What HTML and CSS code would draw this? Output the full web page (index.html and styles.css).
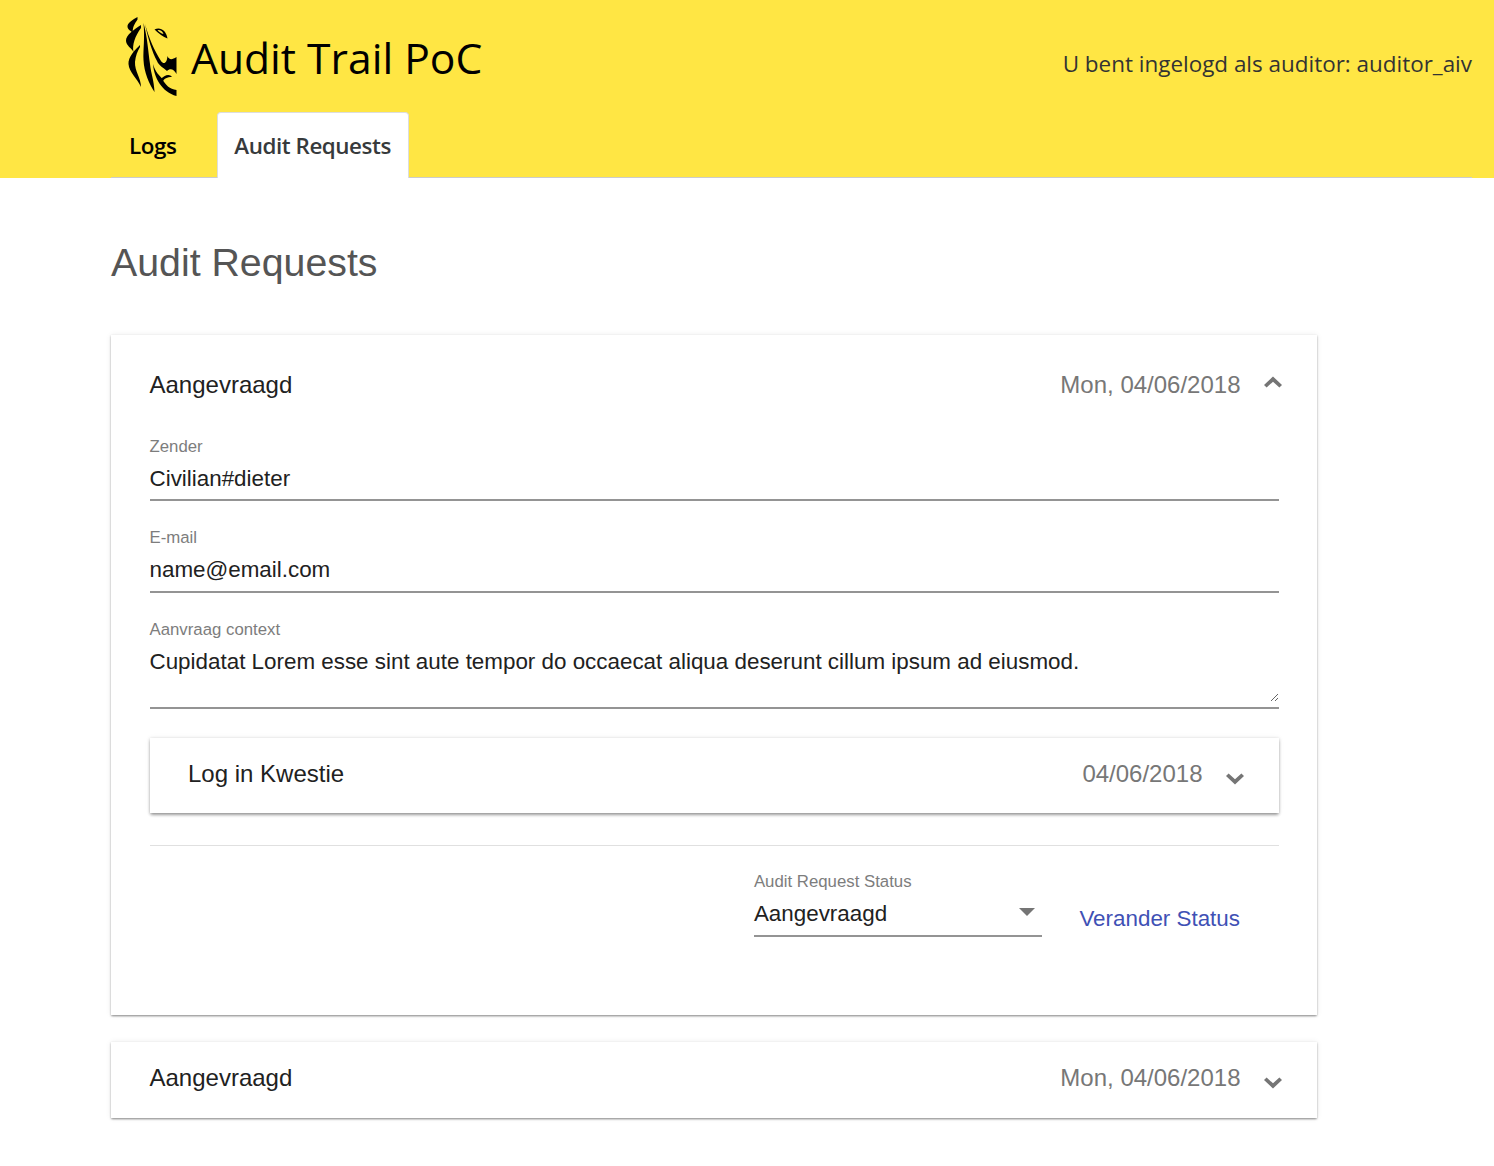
FILE: index.html
```html
<!DOCTYPE html>
<html lang="en">
<head>
    <meta charset="UTF-8">
    <meta name="viewport" content="width=device-width, initial-scale=1.0">
    <title>Audit Trail PoC</title>
    <link rel="stylesheet" href="styles.css">
</head>
<body>
    <header class="site-header">
        <div class="header-top">
            <div class="brand">
                <svg class="logo" viewBox="125 16 52 80" width="52" height="80" aria-hidden="true">
                    <path d="M137.500 17C133 19.500 127 23 127.500 27C128 30 131.500 31 133 33C132 28 134.500 24 137.500 19.500Z"/>
                    <path d="M141 25C135 29 125.500 35 126 41C126.500 46 131.500 48 133.500 52C132 45 135 36 141 28Z"/>
                    <path d="M140 45C135 50 128 57 128.500 64C129 72 137 78 141 87C141 78 134.500 71 135 62C135.500 56 137.500 51 140 47Z"/>
                    <path d="M143.500 23C145 38 143 50 143.500 60C144 72 149 84 154.500 92C154 80 151 74 150 64C148 50 147.500 38 143.500 23Z"/>
                    <path d="M145 24C149 38 154 50 161 61C164 65 167 63 167.500 56C169 60 172 60 176.500 57L176.500 74C174 69 170 68 167 71C163 67 159 66 157 61C152 52 148 38 145 24Z"/>
                    <path d="M153 64C154 78 162 92 176.500 96L176.500 90C170 89 165 85 162.500 79C160 76 155 72 153 64Z"/>
                    <path d="M160 80C165 74 170 74 172 77C167 77 164 79 163 81Z"/>
                    <path d="M154.500 29.500C160 26.500 166 30 167.500 38.500C163 36.500 159 34 154.500 29.500Z"/>
                    <path class="logo-eye" d="M157.500 30C160 29.500 162.500 31 163.500 34C161 33.500 159 32 157.500 30Z"/>
                </svg>
                <h1 class="site-title">Audit Trail PoC</h1>
            </div>
            <p class="user-info">U bent ingelogd als auditor: auditor_aiv</p>
        </div>
        <nav class="tabs">
            <a class="tab" href="#">Logs</a>
            <a class="tab tab-active" href="#">Audit Requests</a>
        </nav>
    </header>

    <main class="content">
        <h2 class="page-title">Audit Requests</h2>

        <section class="panel panel-open">
            <div class="panel-head">
                <span class="panel-title">Aangevraagd</span>
                <span class="panel-date">Mon, 04/06/2018</span>
                <svg class="chevron" viewBox="0 0 18 11" width="18" height="12" aria-hidden="true"><path d="M9 0 18 8.400 15.400 11 9 5.200 2.600 11 0 8.400Z"/></svg>
            </div>

            <div class="field">
                <label class="field-label">Zender</label>
                <div class="field-value">Civilian#dieter</div>
            </div>
            <div class="field">
                <label class="field-label">E-mail</label>
                <div class="field-value">name@email.com</div>
            </div>
            <div class="field">
                <label class="field-label" for="context">Aanvraag context</label>
                <div class="field-area-wrap">
                    <textarea class="field-area" id="context" rows="2">Cupidatat Lorem esse sint aute tempor do occaecat aliqua deserunt cillum ipsum ad eiusmod.</textarea>
                </div>
            </div>

            <div class="panel panel-nested">
                <div class="panel-head">
                    <span class="panel-title">Log in Kwestie</span>
                    <span class="panel-date">04/06/2018</span>
                    <svg class="chevron chevron-down" viewBox="0 0 18 11" width="18" height="12" aria-hidden="true"><path d="M9 11 18 2.600 15.400 0 9 5.800 2.600 0 0 2.600Z"/></svg>
                </div>
            </div>

            <div class="panel-actions">
                <div class="field field-select">
                    <label class="field-label">Audit Request Status</label>
                    <div class="field-value">Aangevraagd<span class="select-arrow"></span></div>
                </div>
                <a class="action-link" href="#">Verander Status</a>
            </div>
        </section>

        <section class="panel">
            <div class="panel-head">
                <span class="panel-title">Aangevraagd</span>
                <span class="panel-date">Mon, 04/06/2018</span>
                <svg class="chevron chevron-down" viewBox="0 0 18 11" width="18" height="12" aria-hidden="true"><path d="M9 11 18 2.600 15.400 0 9 5.800 2.600 0 0 2.600Z"/></svg>
            </div>
        </section>
    </main>
</body>
</html>
```

FILE: styles.css
```css
body {
    margin: 0;
    font-family: "Liberation Sans", Arial, sans-serif;
    color: #212121;
    background-color: #fff;
}
.site-header {
    height: 178px;
    background-color: #ffe644;
    font-family: "Open Sans", sans-serif;
}
.header-top {
    display: flex;
    justify-content: space-between;
    align-items: center;
    height: 112px;
    padding: 0 22px 0 125px;
}
.brand {
    display: flex;
    align-items: center;
    gap: 14px;
}
.logo {
    fill: #000;
}
.logo-eye {
    fill: #ffe644;
}
.site-title {
    margin: 2px 0 0;
    font-size: 42.6px;
    font-weight: 400;
    color: #000;
}
.user-info {
    margin: 14px 0 0;
    font-size: 22.45px;
    color: #333;
}
.tabs {
    display: flex;
    height: 66px;
    margin: 0 22px 0 111px;
    border-bottom: 1px solid #ccc;
    box-sizing: border-box;
}
.tab {
    display: flex;
    align-items: center;
    height: 66px;
    padding: 0 16px 0 18px;
    font-size: 22.4px;
    font-weight: 600;
    letter-spacing: -0.45px;
    color: #000;
    text-decoration: none;
    white-space: nowrap;
    box-sizing: border-box;
}
.tab-active {
    margin-left: 25px;
    padding: 0 17px 0 16px;
    background-color: #fff;
    color: #373a3c;
    border: 1px solid #ddd;
    border-bottom: none;
    border-radius: 4px 4px 0 0;
}
.content {
    width: 1206px;
    margin-left: 111px;
}
.page-title {
    margin: 0;
    padding: 61px 0 49px;
    font-size: 39.3px;
    font-weight: 400;
    line-height: 47px;
    color: #555;
}
.panel {
    margin-bottom: 27px;
    padding: 0 38px 0 38.5px;
    background-color: #fff;
    box-shadow: 0 2px 2px -1px rgba(0, 0, 0, .2), 0 1px 2px rgba(0, 0, 0, .3), 0 0 6px rgba(0, 0, 0, .08);
}
.panel-open {
    height: 680px;
    box-sizing: border-box;
}
.panel-head {
    display: flex;
    align-items: center;
    height: 76px;
    padding-bottom: 4px;
    box-sizing: border-box;
}
.panel-open > .panel-head {
    height: 100px;
    margin-bottom: 1.5px;
    padding-bottom: 0;
}
.panel-title {
    flex: 1;
    font-size: 24px;
}
.panel-date {
    margin-right: 23px;
    font-size: 24px;
    color: #777;
}
.chevron {
    fill: #757575;
    margin: -7px -2.5px 0 0;
}
.chevron-down {
    margin-top: 10px;
}
.field {
    margin-bottom: 26.75px;
}
.field-label {
    display: block;
    font-size: 16.8px;
    line-height: 20px;
    color: #7d7d7d;
}
.field-value {
    position: relative;
    height: 42.75px;
    margin-top: 2px;
    font-size: 22.4px;
    line-height: 40px;
    border-bottom: 2px solid #949494;
    box-sizing: border-box;
}
.field-area-wrap {
    height: 67.5px;
    margin-top: 2px;
    border-bottom: 2px solid #949494;
    box-sizing: border-box;
}
.field-area {
    display: block;
    width: 100%;
    height: 60px;
    margin: 0;
    padding: 5px 0 0;
    font: 22.4px/30px "Liberation Sans", Arial, sans-serif;
    color: #212121;
    border: none;
    outline: none;
    box-sizing: border-box;
}
.panel-nested {
    margin: 29px 0 32px;
    box-shadow: 0 3px 3px -1px rgba(0, 0, 0, .25), 0 1px 3px rgba(0, 0, 0, .25), 0 0 6px rgba(0, 0, 0, .06);
}
.panel-nested .panel-head {
    height: 75px;
}
.panel-actions {
    display: flex;
    align-items: flex-end;
    justify-content: flex-end;
    padding: 26px 39px 0 0;
    border-top: 1px solid #e0e0e0;
}
.field-select {
    width: 288px;
    margin: 0 37.5px 0 0;
}
.select-arrow {
    position: absolute;
    top: 14px;
    right: 7px;
    border-left: 8px solid transparent;
    border-right: 8px solid transparent;
    border-top: 8px solid #757575;
}
.action-link {
    margin-bottom: 3px;
    font-size: 22.4px;
    line-height: 30px;
    color: #3f51b5;
    text-decoration: none;
}
```
